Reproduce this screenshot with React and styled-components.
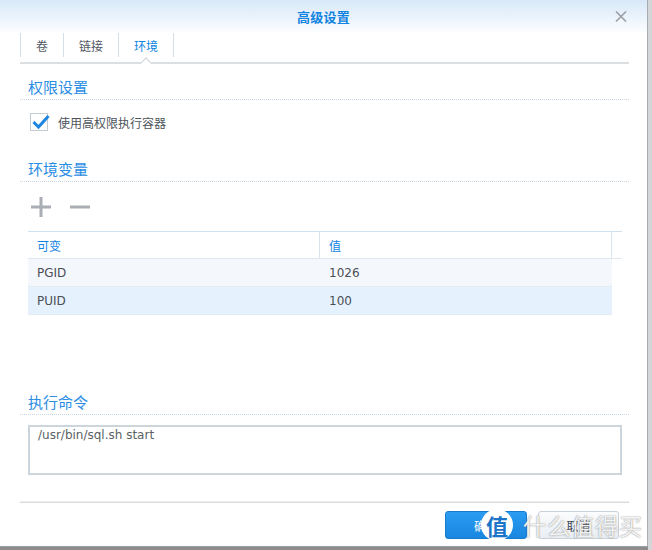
import React from "react";
import styled, { createGlobalStyle } from "styled-components";

const GlobalStyle = createGlobalStyle`
  html, body { margin: 0; padding: 0; }
  body {
    background: #8c8c8c;
    width: 652px;
    height: 550px;
    overflow: hidden;
    font-family: "Noto Sans CJK SC", "DejaVu Sans", sans-serif;
  }
`;

const Page = styled.div`
  width: 652px;
  height: 550px;
  background: linear-gradient(to right, transparent 648px, #d4d6d8 648px);
  position: relative;
`;

const Dialog = styled.div`
  width: 647px;
  height: 546px;
  background: #fff;
  border-right: 1px solid #a9adb1;
  border-bottom: 1px solid #9a9ea2;
  display: flex;
  flex-direction: column;
`;

const Header = styled.div`
  height: 32px;
  display: grid;
  grid-template-columns: 1fr auto 1fr;
  align-items: center;
  background: linear-gradient(#d8e8f8, #fbfdff);
`;

const Title = styled.div`
  grid-column: 2;
  font-size: 13px;
  font-weight: 700;
  color: #1283e0;
  letter-spacing: 0.2px;
`;

const Close = styled.div`
  grid-column: 3;
  justify-self: end;
  margin-right: 20px;
  width: 12px;
  height: 11px;
  display: flex;
`;

const Body = styled.div`
  padding: 0 18px 0 20px;
  display: flex;
  flex-direction: column;
`;

const TabBar = styled.div`
  display: flex;
  height: 30px;
  border-bottom: 2px solid #dcdfe2;
`;

const Tab = styled.div`
  position: relative;
  padding: 0 15px;
  margin-top: 1px;
  height: 24px;
  display: flex;
  align-items: center;
  font-size: 12px;
  color: ${(p) => (p.$active ? "#0b84e2" : "#4f5863")};
  border-left: 1px solid #d6dee6;
  &:last-child { border-right: 1px solid #d6dee6; }
  ${(p) =>
    p.$active &&
    `
    &::after {
      content: "";
      position: absolute;
      left: 50%;
      bottom: -10px;
      width: 7px;
      height: 7px;
      margin-left: -4px;
      background: #fff;
      border-left: 1px solid #cfd3d7;
      border-top: 1px solid #cfd3d7;
      transform: rotate(45deg);
    }
  `}
`;

const SectionTitle = styled.div`
  margin-top: ${(p) => p.$mt}px;
  height: 22px;
  padding-left: 8px;
  font-size: 15px;
  line-height: 20px;
  color: #2b8de4;
  border-bottom: 1px dotted #c9d6e3;
`;

const CheckRow = styled.label`
  margin-top: 13px;
  padding-left: 10px;
  display: flex;
  align-items: center;
  gap: 10px;
  font-size: 12px;
  color: #4c5359;
`;

const CheckBox = styled.span`
  width: 16px;
  height: 16px;
  border: 1px solid #c4ccd4;
  background: #fff;
  position: relative;
  display: flex;
  align-items: center;
  justify-content: center;
`;

const Toolbar = styled.div`
  margin-top: 15px;
  padding-left: 11px;
  height: 20px;
  display: flex;
  gap: 19px;
  align-items: center;
`;

const Table = styled.div`
  margin-top: 14px;
  margin-left: 8px;
  width: 594px;
  display: flex;
  flex-direction: column;
  font-family: "DejaVu Sans", "Noto Sans CJK SC", sans-serif;
  font-size: 12px;
`;

const HeadRow = styled.div`
  display: grid;
  grid-template-columns: 292px 292px 10px;
  height: 26px;
  border-top: 1px solid #cfe0ef;
  border-bottom: 1px solid #dfe8f1;
`;

const HeadCell = styled.div`
  display: flex;
  align-items: center;
  padding-left: 9px;
  color: #1583e2;
  font-family: "Noto Sans CJK SC", sans-serif;
  border-right: ${(p) => (p.$last ? "none" : "1px solid #d8e5f1")};
`;

const Row = styled.div`
  display: grid;
  grid-template-columns: 292px 292px;
  height: 27px;
  background: ${(p) => (p.$selected ? "#e5f2fd" : "#f4f8fc")};
  border-bottom: 1px solid #e3ebf3;
  width: 584px;
`;

const Cell = styled.div`
  display: flex;
  align-items: center;
  padding-left: 9px;
  color: #4a4f55;
`;

const CmdBox = styled.div`
  margin-top: 10px;
  margin-left: 8px;
  height: 45px;
  border: 2px solid #ccd4dc;
  padding: 1px 0 0 8px;
  font-family: "DejaVu Sans", sans-serif;
  font-size: 12px;
  color: #5a5f64;
  box-sizing: content-box;
  width: 582px;
`;

const Footer = styled.div`
  margin-top: auto;
  margin-left: 20px;
  margin-right: 18px;
  border-top: 1px solid #dadada;
  box-shadow: 0 -1px 0 #f0f0f0;
  padding: 8px 10px 7px 0;
  display: flex;
  justify-content: flex-end;
  gap: 11px;
`;

const Button = styled.div`
  width: ${(p) => p.$w}px;
  height: 26px;
  border-radius: 3px;
  display: flex;
  align-items: center;
  justify-content: center;
  font-size: 12px;
  ${(p) =>
    p.$primary
      ? `
    background: linear-gradient(#2a9cf2, #1a86e0);
    border: 1px solid #167ccf;
    color: #fff;
  `
      : `
    background: linear-gradient(#fbfcfd, #e9eef3);
    border: 1px solid #c8d0d8;
    color: #404850;
  `}
`;

const Watermark = styled.div`
  position: absolute;
  left: 481px;
  top: 508px;
  display: flex;
  align-items: center;
  gap: 10px;
  pointer-events: none;
`;

const Badge = styled.div`
  width: 32px;
  height: 32px;
  border-radius: 50%;
  background: #fff;
  display: flex;
  align-items: center;
  justify-content: center;
  font-size: 22px;
  font-weight: 700;
  color: #1b74c8;
`;

const WmText = styled.div`
  font-size: 23px;
  color: rgba(255, 255, 255, 0.9);
  letter-spacing: 1px;
  text-shadow: 0 0 1px rgba(90, 90, 90, 0.6), 0 0 2px rgba(120, 120, 120, 0.5);
`;

export default function App() {
  return (
    <Page>
      <GlobalStyle />
      <Dialog>
        <Header>
          <Title>高级设置</Title>
          <Close>
            <svg width="12" height="11" viewBox="0 0 12 11">
              <path d="M1 0.5 L11 10.5 M11 0.5 L1 10.5" stroke="#9ba1a7" strokeWidth="1.6" />
            </svg>
          </Close>
        </Header>
        <Body>
          <TabBar>
            <Tab>卷</Tab>
            <Tab>链接</Tab>
            <Tab $active>环境</Tab>
          </TabBar>

          <SectionTitle $mt={13}>权限设置</SectionTitle>
          <CheckRow>
            <CheckBox>
              <svg width="18" height="16" viewBox="0 0 18 16" style={{ position: "absolute", left: 1, top: 0 }}>
                <path d="M1.5 8 L6.5 13 L16.5 2" fill="none" stroke="#1d86e0" strokeWidth="3" />
              </svg>
            </CheckBox>
            使用高权限执行容器
          </CheckRow>

          <SectionTitle $mt={28}>环境变量</SectionTitle>
          <Toolbar>
            <svg width="20" height="20" viewBox="0 0 20 20">
              <path d="M10 0 V20 M0 10 H20" stroke="#a9aeb4" strokeWidth="3" />
            </svg>
            <svg width="20" height="20" viewBox="0 0 20 20">
              <path d="M0 10 H20" stroke="#a9aeb4" strokeWidth="3" />
            </svg>
          </Toolbar>

          <Table>
            <HeadRow>
              <HeadCell>可变</HeadCell>
              <HeadCell>值</HeadCell>
              <HeadCell $last />
            </HeadRow>
            <Row>
              <Cell>PGID</Cell>
              <Cell>1026</Cell>
            </Row>
            <Row $selected>
              <Cell>PUID</Cell>
              <Cell>100</Cell>
            </Row>
          </Table>

          <SectionTitle $mt={77}>执行命令</SectionTitle>
          <CmdBox>/usr/bin/sql.sh start</CmdBox>
        </Body>
        <Footer>
          <Button $primary $w={80}>确定</Button>
          <Button $w={79}>取消</Button>
        </Footer>
      </Dialog>
      <Watermark>
        <Badge>值</Badge>
        <WmText>什么值得买</WmText>
      </Watermark>
    </Page>
  );
}
